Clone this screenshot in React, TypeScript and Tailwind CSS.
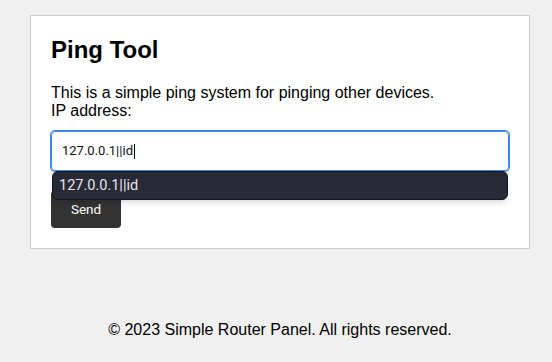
import React from 'react';

export default function App() {
  return (
    <div className="min-h-[362px] bg-[#f0f0f0] pt-[15px] font-['Liberation_Sans',Arial,sans-serif] text-black">
      <div className="ml-[30px] w-[500px]">
        {/* main card */}
        <div className="border border-[#ccc] bg-white p-5">
          <h2 className="text-[24px] font-bold leading-[28px]">Ping Tool</h2>
          <p className="mt-5 text-[16px] leading-[18px]">
            This is a simple ping system for pinging other devices.
            <br />
            IP address:
          </p>

          <div className="relative">
            <div className="mt-[11px] flex h-[40px] items-center rounded-[4px] border border-[#3b86e6] pl-[10px] ring-1 ring-[#3b86e6] font-['Roboto',sans-serif] text-[13px] text-[#111]">
              <span>127.0.0.1||id</span>
              <span className="ml-[1px] inline-block h-[15px] w-px bg-black" />
            </div>

            {/* autocomplete suggestion */}
            <div className="absolute left-[1px] right-[1px] top-[40px] z-10 flex h-[29px] items-center rounded-[6px] border border-[#15161c] bg-[#272a36] pl-[6px] font-['Roboto',sans-serif] text-[14.5px] text-[#e6e6ea] shadow-md">
              127.0.0.1||id
            </div>
          </div>

          <button className="mt-[20px] h-[37px] w-[70px] rounded-[4px] bg-[#333] font-['Roboto',sans-serif] text-[13.5px] text-white">
            Send
          </button>
        </div>

        <footer className="mt-[72px] text-center text-[16px] leading-[18px]">
          © 2023 Simple Router Panel. All rights reserved.
        </footer>
      </div>
    </div>
  );
}
